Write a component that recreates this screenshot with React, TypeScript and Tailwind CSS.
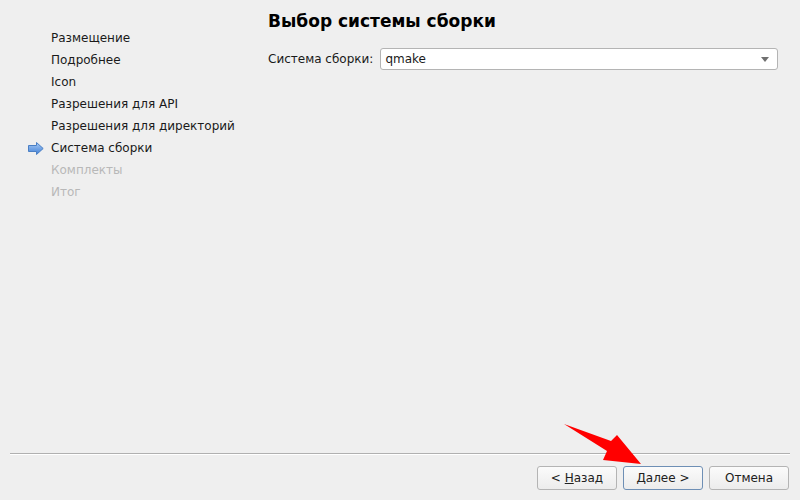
import React from 'react';

const steps = [
  { label: 'Размещение', state: 'done' },
  { label: 'Подробнее', state: 'done' },
  { label: 'Icon', state: 'done' },
  { label: 'Разрешения для API', state: 'done' },
  { label: 'Разрешения для директорий', state: 'done' },
  { label: 'Система сборки', state: 'current' },
  { label: 'Комплекты', state: 'todo' },
  { label: 'Итог', state: 'todo' },
];

const StepArrow = () => (
  <svg width="16" height="13" viewBox="0 0 16 13">
    <defs>
      <linearGradient id="sa" x1="0" y1="0" x2="0" y2="1">
        <stop offset="0" stopColor="#a9cbf5" />
        <stop offset="1" stopColor="#3f7fd6" />
      </linearGradient>
    </defs>
    <path d="M0.5 3.5 H8.5 V0.5 L15.2 6.5 L8.5 12.5 V9.5 H0.5 Z" fill="url(#sa)" stroke="#4a7fc4" strokeWidth="1" />
  </svg>
);

const Button = ({ children, focused }: { children: React.ReactNode; focused?: boolean }) => (
  <button
    className={`h-[24px] w-[80px] rounded-[3px] border text-[12px] text-[#202020] bg-gradient-to-b from-[#fbfbfb] to-[#ececec] ${
      focused ? 'border-[#6e8fb5] from-[#f3f7fb] to-[#e2e9f1]' : 'border-[#b4b4b4]'
    }`}
  >
    {children}
  </button>
);

export default function App() {
  return (
    <div
      className="relative w-[800px] h-[500px] bg-[#efefef] text-[#1a1a1a] flex flex-col overflow-hidden"
      style={{ fontFamily: '"DejaVu Sans", sans-serif' }}
    >
      <div className="flex flex-1">
        {/* Steps */}
        <div className="w-[268px] pt-[27px] pl-[28px]">
          {steps.map((s) => (
            <div key={s.label} className="h-[22px] flex items-center text-[12px]">
              <div className="w-[23px] flex items-center">{s.state === 'current' && <StepArrow />}</div>
              <span className={s.state === 'todo' ? 'text-[#b8b8b8]' : 'text-[#1a1a1a]'}>{s.label}</span>
            </div>
          ))}
        </div>

        {/* Page */}
        <div className="flex-1 pr-[22px]">
          <h1 className="mt-[9px] h-[24px] text-[17px] font-bold text-black leading-[24px]">Выбор системы сборки</h1>
          <div className="mt-[15px] flex items-center gap-[7px] text-[12px]">
            <span>Система сборки:</span>
            <div className="flex-1 h-[22px] rounded-[3px] border border-[#b4b4b4] bg-white flex items-center pl-[4px] pr-[8px]">
              <span className="flex-1">qmake</span>
              <svg width="8" height="5" viewBox="0 0 8 5">
                <path d="M0 0 H8 L4 5 Z" fill="#707070" />
              </svg>
            </div>
          </div>
        </div>
      </div>

      {/* Footer */}
      <div className="mx-[10px] border-t border-[#b0b0b0] border-b-white border-b" />
      <div className="h-[45px] flex items-start justify-end gap-[6px] pt-[11px] pr-[11px]">
        <Button>
          &lt; <span className="underline">Н</span>азад
        </Button>
        <Button focused>
          <span className="underline">Д</span>алее &gt;
        </Button>
        <Button>Отмена</Button>
      </div>

      {/* Annotation arrow */}
      <svg className="absolute left-0 top-0 pointer-events-none" width="800" height="500" viewBox="0 0 800 500">
        <polygon points="564,424 611,441 617,435 641,464 603,460 607,451" fill="#ff0000" />
      </svg>
    </div>
  );
}
